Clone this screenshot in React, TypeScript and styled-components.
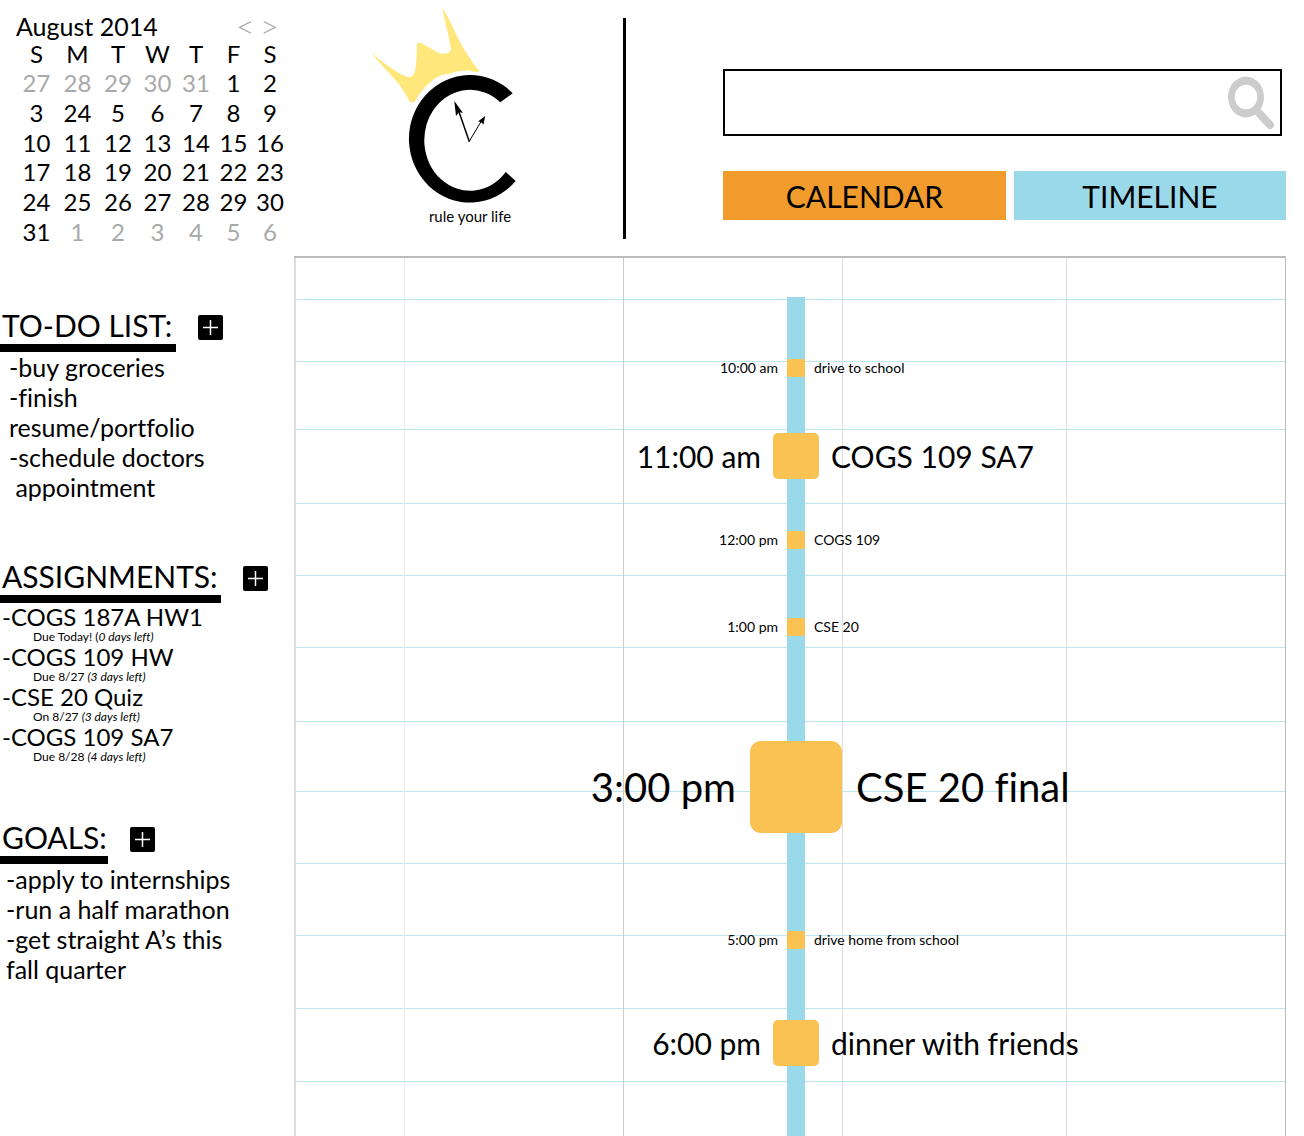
import React from "react";
import styled, { createGlobalStyle } from "styled-components";

const ink = "#000";
const muted = "#a9a9a9";
const sky = "#9ad9e9";
const orange = "#f19b2c";
const amber = "#fac253";

const GlobalStyle = createGlobalStyle`
  * { box-sizing: border-box; }
  body { margin: 0; background: #fff; font-variant-ligatures: none; }
  body, button, input { font-family: Lato, "Open Sans", sans-serif; color: ${ink}; }
  h1, h2, ul, ol, p { margin: 0; padding: 0; font-weight: 400; }
  ul, ol { list-style: none; }
  button { padding: 0; border: 0; background: none; cursor: pointer; }
`;

const Page = styled.div`
  display: flex;
  flex-direction: column;
  min-height: 100vh;
`;

const Header = styled.header`
  display: flex;
  min-height: 256px;
`;

const MonthPanel = styled.section`
  flex: none;
  width: 294px;
  padding: 12px 0 0 16px;
`;

const MonthBar = styled.div`
  display: flex;
  justify-content: space-between;
  width: 260px;
  height: 28px;
`;

const MonthName = styled.h2`
  font-size: 25px;
  line-height: 28px;
`;

const Arrows = styled.div`
  display: flex;
  gap: 8px;
`;

const Arrow = styled.button`
  width: 16px;
  font-size: 32px;
  font-weight: 300;
  line-height: 28px;
  color: ${muted};
`;

const MonthTable = styled.table`
  width: 272px;
  height: 207px;
  table-layout: fixed;
  border-collapse: collapse;
  font-size: 24px;
  line-height: 28px;
  text-align: center;
`;

const DayHead = styled.th`
  padding: 0;
  font-weight: 400;
`;

const Day = styled.td<{ $muted: boolean }>`
  padding: 0;
  color: ${(p) => (p.$muted ? muted : ink)};
`;

const Brand = styled.div`
  flex: none;
  display: flex;
  flex-direction: column;
  align-items: center;
  width: 329px;
  padding: 4px 0 0 23px;
`;

const Tagline = styled.p`
  font-size: 15px;
  line-height: 24px;
`;

const Divider = styled.div`
  flex: none;
  width: 3px;
  margin: 18px 0 17px;
  background: ${ink};
`;

const Tools = styled.div`
  flex: 1;
  padding: 69px 18px 0 97px;
`;

const SearchForm = styled.form`
  display: flex;
  align-items: center;
  height: 67px;
  margin-right: 4px;
  padding-right: 4px;
  border: 2px solid ${ink};
`;

const SearchInput = styled.input`
  flex: 1;
  min-width: 0;
  height: 100%;
  padding: 0 16px;
  border: 0;
  outline: 0;
  background: transparent;
  font-size: 28px;
`;

const SearchButton = styled.button`
  display: flex;
`;

const ViewTabs = styled.nav`
  display: flex;
  gap: 8px;
  margin-top: 35px;
`;

const ViewTab = styled.button<{ $color: string; $share: number }>`
  flex: ${(p) => p.$share} 1 0;
  height: 49px;
  padding-top: 2px;
  background: ${(p) => p.$color};
  font-size: 30px;
  line-height: 47px;
`;

const Main = styled.main`
  flex: 1;
  display: flex;
`;

const Sidebar = styled.aside`
  flex: none;
  display: flex;
  flex-direction: column;
  gap: 55px;
  width: 294px;
  padding-top: 52px;
`;

const SectionHead = styled.div`
  display: flex;
  gap: 22px;
`;

const SectionTitle = styled.h2<{ $width: number }>`
  width: ${(p) => p.$width}px;
  padding: 0 0 2px 2px;
  border-bottom: 8px solid ${ink};
  font-size: 30px;
  line-height: 34px;
  white-space: nowrap;
`;

const AddButton = styled.button`
  display: flex;
  align-self: flex-start;
  margin-top: 7px;
`;

const NoteList = styled.ul<{ $indent: number }>`
  width: 244px;
  padding: 0 0 2px ${(p) => p.$indent}px;
  font-size: 25px;
  line-height: 30px;
`;

const TaskList = styled.ul`
  padding: 2px 0 0 2px;
`;

const TaskName = styled.p`
  font-size: 24px;
  line-height: 24px;
`;

const TaskDue = styled.p`
  padding-left: 31px;
  font-size: 12px;
  line-height: 16px;
`;

const Board = styled.section`
  flex: 1;
  display: grid;
  margin-right: 18px;
  border-top: 2px solid #bbb;
`;

const Layer = styled.div`
  grid-area: 1 / 1;
`;

const Columns = styled(Layer)`
  display: grid;
  grid-template-columns: 111fr 219fr 219fr 224fr 219fr;
`;

const Column = styled.div<{ $line: string }>`
  border-right: 1px solid ${(p) => p.$line};

  &:first-child {
    border-left: 2px solid #ddd;
  }
`;

const Rules = styled(Layer)`
  display: flex;
  flex-direction: column;
`;

const Rule = styled.div<{ $height: number }>`
  flex: none;
  height: ${(p) => p.$height}px;
  border-bottom: 1px solid #bde7ef;
`;

const SpineLayer = styled(Layer)`
  display: flex;
  justify-content: center;
  padding: 39px 0 0 12px;
`;

const Spine = styled.div`
  width: 18px;
  background: ${sky};
`;

const Events = styled.ol`
  && {
    grid-area: 1 / 1;
    padding-left: 12px;
  }
`;

type Size = "small" | "medium" | "large";

const sizes: Record<Size, { box: number; radius: number; font: number; gap: number }> = {
  small: { box: 18, radius: 2, font: 14, gap: 9 },
  medium: { box: 46, radius: 5, font: 30, gap: 12 },
  large: { box: 92, radius: 11, font: 40, gap: 14 },
};

const EventRow = styled.li<{ $size: Size; $before: number }>`
  display: grid;
  grid-template-columns: minmax(0, 1fr) auto minmax(0, 1fr);
  align-items: center;
  column-gap: ${(p) => sizes[p.$size].gap}px;
  height: ${(p) => sizes[p.$size].box}px;
  margin-top: ${(p) => p.$before}px;
  font-size: ${(p) => sizes[p.$size].font}px;
  line-height: 1;
  white-space: nowrap;
`;

const EventTime = styled.time`
  text-align: right;
`;

const Marker = styled.span<{ $size: Size }>`
  width: ${(p) => sizes[p.$size].box}px;
  height: ${(p) => sizes[p.$size].box}px;
  border-radius: ${(p) => sizes[p.$size].radius}px;
  background: ${amber};
`;

const weekdays = ["S", "M", "T", "W", "T", "F", "S"];
const columnWidths = [41, 41, 40, 39, 38, 37, 36];
const weeks = [
  [-27, -28, -29, -30, -31, 1, 2],
  [3, 24, 5, 6, 7, 8, 9],
  [10, 11, 12, 13, 14, 15, 16],
  [17, 18, 19, 20, 21, 22, 23],
  [24, 25, 26, 27, 28, 29, 30],
  [31, -1, -2, -3, -4, -5, -6],
];

const tasks = [
  { name: "-COGS 187A HW1", due: "Due Today! (", left: "0 days left)" },
  { name: "-COGS 109 HW", due: "Due 8/27 ", left: "(3 days left)" },
  { name: "-CSE 20 Quiz", due: "On 8/27 ", left: "(3 days left)" },
  { name: "-COGS 109 SA7", due: "Due 8/28 ", left: "(4 days left)" },
];

const columnLines = ["#eee", "#ccc", "#ddd", "#ddd", "#bbb"];
const ruleHeights = [42, 62, 68, 74, 72, 72, 74, 70, 72, 72, 73, 73];

const events: { time: string; title: string; size: Size; before: number }[] = [
  { time: "10:00 am", title: "drive to school", size: "small", before: 101 },
  { time: "11:00 am", title: "COGS 109 SA7", size: "medium", before: 56 },
  { time: "12:00 pm", title: "COGS 109", size: "small", before: 52 },
  { time: "1:00 pm", title: "CSE 20", size: "small", before: 69 },
  { time: "3:00 pm", title: "CSE 20 final", size: "large", before: 105 },
  { time: "5:00 pm", title: "drive home from school", size: "small", before: 98 },
  { time: "6:00 pm", title: "dinner with friends", size: "medium", before: 71 },
];

function Logo() {
  return (
    <svg width="200" height="200" viewBox="370 4 200 200" role="img" aria-label="Crowned clock">
      <path
        fill="#ffe77c"
        d="M371.7 52.7C383 63 396 72.500 408 77.200C412 77.500 414.500 74 415.200 70C417 61 416.500 51 417 43.400Q419 42 422 43.400C428 46.500 434 50.500 439.500 53.600L446 53.400Q451 52.500 450.800 49C449 34 444 20 442.500 7.500C450 20 455 32 460 42C466 53 472 62 479.500 71.500Q474 72.500 470 70.600C460 70.500 455 71.500 452 73.200Q446 74 441 75.200C429 81 421 91 415 101Q412.500 103.500 410 102C405 93 401 86 394 78.500C387 70 378 62 371.700 52.700Z"
      />
      <path
        fill={ink}
        d="M512.700 93.300A61 63.800 0 1 0 515.700 181L505.700 172A45.800 50.500 0 1 1 500.300 102.300Z"
      />
      <path d="M469.300 141.500L458 109" stroke={ink} strokeWidth="1.500" />
      <path d="M469 141.700L482 120" stroke={ink} strokeWidth="1" />
      <path fill={ink} d="M454.300 101L463 113L459 112L456 116Z" />
      <path fill={ink} d="M485.200 116L483.500 124.500L481 122L478 121.500Z" />
    </svg>
  );
}

function Magnifier() {
  return (
    <svg width="48" height="56" viewBox="0 0 48 56" aria-hidden="true">
      <path
        fill="#ccc"
        fillRule="evenodd"
        d="M0 22a18 20.400 0 1 1 36 0a18 20.400 0 1 1 -36 0ZM6.700 22a11.300 12.200 0 1 0 22.600 0a11.300 12.200 0 1 0 -22.600 0Z"
      />
      <path d="M29 36L42 50" stroke="#ccc" strokeWidth="8" strokeLinecap="round" />
    </svg>
  );
}

function Plus() {
  return (
    <svg width="25" height="25" viewBox="0 0 25 25" aria-hidden="true">
      <rect width="25" height="25" rx="2" fill={ink} />
      <path d="M5 12.500H20M12.500 5V20" stroke="#fff" strokeWidth="1.500" />
    </svg>
  );
}

function SidebarHead({ title, width }: { title: string; width: number }) {
  return (
    <SectionHead>
      <SectionTitle $width={width}>{title}</SectionTitle>
      <AddButton type="button" aria-label={`Add to ${title}`}>
        <Plus />
      </AddButton>
    </SectionHead>
  );
}

export default function App() {
  return (
    <Page>
      <GlobalStyle />
      <Header>
        <MonthPanel>
          <MonthBar>
            <MonthName>August 2014</MonthName>
            <Arrows>
              <Arrow type="button" aria-label="Previous month">&lt;</Arrow>
              <Arrow type="button" aria-label="Next month">&gt;</Arrow>
            </Arrows>
          </MonthBar>
          <MonthTable>
            <colgroup>
              {columnWidths.map((w, i) => (
                <col key={i} width={w} />
              ))}
            </colgroup>
            <thead>
              <tr>
                {weekdays.map((d, i) => (
                  <DayHead key={i} scope="col">{d}</DayHead>
                ))}
              </tr>
            </thead>
            <tbody>
              {weeks.map((week, i) => (
                <tr key={i}>
                  {week.map((d, j) => (
                    <Day key={j} $muted={d < 0}>{Math.abs(d)}</Day>
                  ))}
                </tr>
              ))}
            </tbody>
          </MonthTable>
        </MonthPanel>
        <Brand>
          <Logo />
          <Tagline>rule your life</Tagline>
        </Brand>
        <Divider />
        <Tools>
          <SearchForm role="search" onSubmit={(e) => e.preventDefault()}>
            <SearchInput type="text" aria-label="Search" />
            <SearchButton type="submit" aria-label="Search">
              <Magnifier />
            </SearchButton>
          </SearchForm>
          <ViewTabs>
            <ViewTab type="button" $color={orange} $share={283}>CALENDAR</ViewTab>
            <ViewTab type="button" $color={sky} $share={272}>TIMELINE</ViewTab>
          </ViewTabs>
        </Tools>
      </Header>
      <Main>
        <Sidebar>
          <section>
            <SidebarHead title="TO-DO LIST:" width={176} />
            <NoteList $indent={9}>
              <li>-buy groceries</li>
              <li>-finish<br />resume/portfolio</li>
              <li>-schedule doctors<br />&nbsp;appointment</li>
            </NoteList>
          </section>
          <section>
            <SidebarHead title="ASSIGNMENTS:" width={221} />
            <TaskList>
              {tasks.map((t) => (
                <li key={t.name}>
                  <TaskName>{t.name}</TaskName>
                  <TaskDue>{t.due}<em>{t.left}</em></TaskDue>
                </li>
              ))}
            </TaskList>
          </section>
          <section>
            <SidebarHead title="GOALS:" width={108} />
            <NoteList $indent={6}>
              <li>-apply to internships</li>
              <li>-run a half marathon</li>
              <li>-get straight A’s this<br />fall quarter</li>
            </NoteList>
          </section>
        </Sidebar>
        <Board aria-label="Timeline">
          <Rules>
            {ruleHeights.map((h, i) => (
              <Rule key={i} $height={h} />
            ))}
          </Rules>
          <Columns>
            {columnLines.map((line, i) => (
              <Column key={i} $line={line} />
            ))}
          </Columns>
          <SpineLayer>
            <Spine />
          </SpineLayer>
          <Events>
            {events.map((e) => (
              <EventRow key={e.time} $size={e.size} $before={e.before}>
                <EventTime>{e.time}</EventTime>
                <Marker $size={e.size} />
                <span>{e.title}</span>
              </EventRow>
            ))}
          </Events>
        </Board>
      </Main>
    </Page>
  );
}
